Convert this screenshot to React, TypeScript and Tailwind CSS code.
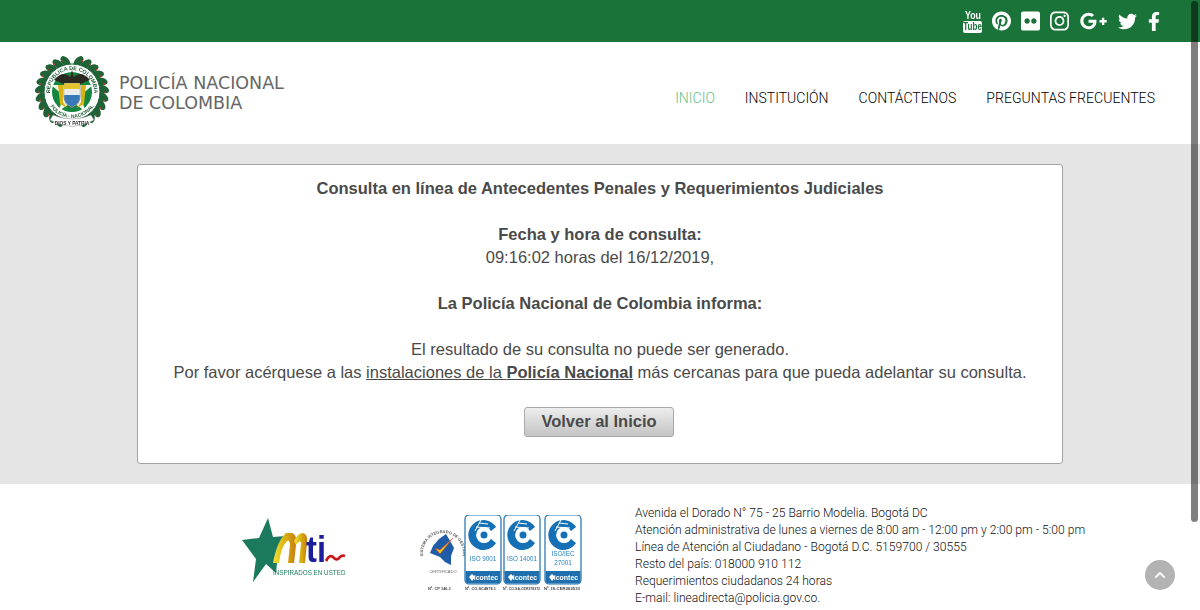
import { FaPinterest, FaFlickr, FaInstagram, FaGooglePlusG, FaTwitter, FaFacebookF, FaChevronUp } from "react-icons/fa"

function YoutubeIcon() {
  return (
    <div className="flex h-[23px] w-[19px] flex-col items-center font-['Liberation_Sans',sans-serif] font-bold text-white">
      <span className="block h-[10px] scale-x-[0.8] text-[11px] leading-[10px]">You</span>
      <span className="mt-px flex h-[12px] w-[19px] items-center justify-center rounded-[2px] bg-white text-[10px] leading-none text-[#1a7339]">
        <span className="scale-x-[0.8]">Tube</span>
      </span>
    </div>
  )
}

function TopBar() {
  return (
    <div className="flex h-[42px] items-center justify-end gap-[10px] bg-[#1a7339] pr-[40px] text-white">
      <YoutubeIcon />
      <FaPinterest className="h-[20px] w-[19px]" />
      <FaFlickr className="h-[22px] w-[19px]" />
      <FaInstagram className="h-[22px] w-[19px]" />
      <FaGooglePlusG className="h-[22px] w-[29px]" />
      <FaTwitter className="h-[21px] w-[19px]" />
      <FaFacebookF className="ml-[1px] h-[23px] w-[12px]" />
    </div>
  )
}

function PoliceCrest() {
  const leaves = Array.from({ length: 11 }, (_, i) => 12 + i * 14.5)
  return (
    <svg viewBox="0 0 76 76" className="h-[76px] w-[76px] shrink-0 blur-[0.35px]">
      <defs>
        <path id="ringTop" d="M 16 37 A 22 22 0 0 1 60 37" />
        <path id="ringBottom" d="M 12.5 42 A 26 26 0 0 0 63.5 42" />
      </defs>
      {leaves.map((a) => (
        <g key={a}>
          <ellipse cx="38" cy="6" rx="3.8" ry="6.5" fill="#1e6236" transform={`rotate(${a} 38 37) rotate(28 38 6)`} />
          <ellipse cx="38" cy="6" rx="3.8" ry="6.5" fill="#1e6236" transform={`rotate(${-a} 38 37) rotate(-28 38 6)`} />
          <circle cx="38" cy="4" r="0.9" fill="#d3312c" transform={`rotate(${a + 6} 38 37)`} />
          <circle cx="38" cy="4" r="0.9" fill="#d3312c" transform={`rotate(${-a - 6} 38 37)`} />
        </g>
      ))}
      <circle cx="38" cy="37" r="28" fill="#fff" stroke="#1e6236" strokeWidth="1" />
      <text fontSize="5.4" fontWeight="700" fill="#1c5a33" fontFamily="Liberation Sans, sans-serif">
        <textPath href="#ringTop" startOffset="50%" textAnchor="middle">REPÚBLICA DE COLOMBIA</textPath>
      </text>
      <text fontSize="5" fontWeight="700" fill="#1c5a33" fontFamily="Liberation Sans, sans-serif">
        <textPath href="#ringBottom" startOffset="50%" textAnchor="middle">POLICÍA · NACIONAL</textPath>
      </text>
      <circle cx="38" cy="37" r="20" fill="#12853f" />
      <polygon points="38,17 43,30 59,30 47,40 51,56 38,47 25,56 29,40 17,30 33,30" fill="#f3f5ef" />
      <path d="M20 25 Q29 15 36 22 L38 15 L40 22 Q47 15 56 25 L46 29 L30 29 Z" fill="#2b2a22" />
      <path d="M24 30 L29 30 L29 47 L33 53 L26 49 Z" fill="#d9b313" />
      <path d="M52 30 L47 30 L47 47 L43 53 L50 49 Z" fill="#d9b313" />
      <path d="M30 28 H46 V42 Q46 49 38 53 Q30 49 30 42 Z" fill="#f4e5a6" stroke="#333" strokeWidth="0.5" />
      <rect x="30.3" y="28.5" width="15.4" height="5.5" fill="#e3c22b" />
      <rect x="30.3" y="34" width="15.4" height="6" fill="#e9edf0" />
      <path d="M30.3 40 H45.7 V43 Q45.7 48 38 52.5 Q30.3 48 30.3 43 Z" fill="#3a79b8" />
      <path d="M19 60 Q38 68 57 60 L60 65 Q38 78 16 65 Z" fill="#fff" stroke="#8a8a8a" strokeWidth="0.5" />
      <text x="38" y="70" textAnchor="middle" fontSize="4.8" fontWeight="700" fill="#333" fontFamily="Liberation Sans, sans-serif">DIOS Y PATRIA</text>
    </svg>
  )
}

function Header() {
  return (
    <header className="flex h-[102px] items-center justify-between bg-white pl-[34px] pr-[45px]">
      <div className="flex items-center gap-[9px]">
        <PoliceCrest />
        <div className="font-['DejaVu_Sans',sans-serif] text-[17.5px] leading-[20px] text-[#666]">
          <div>POLICÍA NACIONAL</div>
          <div>DE COLOMBIA</div>
        </div>
      </div>
      <nav className="flex items-center gap-[30px] pt-[10px] font-['Roboto',sans-serif] text-[14px] font-light text-black">
        <a className="text-[#5fbf85]">INICIO</a>
        <a>INSTITUCIÓN</a>
        <a>CONTÁCTENOS</a>
        <a className="tracking-[0.05px]">PREGUNTAS FRECUENTES</a>
      </nav>
    </header>
  )
}

function ResultCard() {
  return (
    <div className="mx-auto h-[300px] w-[926px] rounded-[3px] border border-[#a3a3a3] bg-white pt-[12px] text-center font-['Liberation_Sans',sans-serif] text-[16.5px] leading-[23px] text-[#4a4a4a]">
      <p className="font-bold">Consulta en línea de Antecedentes Penales y Requerimientos Judiciales</p>
      <p className="mt-[23px] font-bold">Fecha y hora de consulta:</p>
      <p>09:16:02 horas del 16/12/2019,</p>
      <p className="mt-[23px] font-bold">La Policía Nacional de Colombia informa:</p>
      <p className="mt-[23px]">El resultado de su consulta no puede ser generado.</p>
      <p>
        Por favor acérquese a las <span className="underline">instalaciones de la <b>Policía Nacional</b></span> más cercanas para que pueda adelantar su consulta.
      </p>
      <button className="mr-[2px] mt-[23px] h-[30px] w-[150px] rounded-[3px] border border-[#a8a8a8] bg-gradient-to-b from-[#ededed] to-[#c4c4c4] pb-[2px] text-[16.5px] font-bold text-[#4a4a4a]">
        Volver al Inicio
      </button>
    </div>
  )
}

function MtiLogo() {
  return (
    <svg viewBox="0 0 106 68" className="h-[68px] w-[106px] shrink-0 blur-[0.4px]">
      <defs>
        <linearGradient id="ribbon" x1="0" y1="0" x2="1" y2="0">
          <stop offset="0" stopColor="#f2e33a" />
          <stop offset="0.5" stopColor="#d9b311" />
          <stop offset="1" stopColor="#c77d0e" />
        </linearGradient>
      </defs>
      <polygon points="26,1 31,20 44,19 36,36 34,56 24,47 11,65 14,42 0,23 17,21" fill="#1b7a5e" />
      <path d="M31 46 Q35 24 44 16 L50 16 Q55 17 54 28 L52 46 L46 46 L48 27 Q47 22 45 24 Q39 30 37 46 Z" fill="url(#ribbon)" />
      <path d="M52 24 Q56 16 61 16 Q66 17 65 26 L63 46 L57 46 L59 26 Q58 22 54 28 Z" fill="url(#ribbon)" />
      <text x="64" y="45" fontSize="37" fontWeight="700" textLength="20" lengthAdjust="spacingAndGlyphs" fill="#1c1f9c" fontFamily="Liberation Sans, sans-serif">ti</text>
      <path d="M84 44 Q88 36 92 41 Q95 44 98 40 Q100 38 103 39" fill="none" stroke="#c8161d" strokeWidth="2.8" />
      <text x="31" y="58" fontSize="6.3" fill="#1b7a5e" fontFamily="Liberation Sans, sans-serif">INSPIRADOS EN USTED</text>
    </svg>
  )
}

function IsoBadge({ x, w, lines }: { x: number; w: number; lines: string[] }) {
  const cx = x + w / 2
  return (
    <g>
      <rect x={x} y="0" width={w} height="69" rx="4" fill="#fff" stroke="#1f6fae" strokeWidth="1.2" />
      <path d={`M${x + 0.6} 56 H${x + w - 0.6} V65 Q${x + w - 0.6} 68.5 ${x + w - 4} 68.5 H${x + 4} Q${x + 0.6} 68.5 ${x + 0.6} 65 Z`} fill="#1f6fae" />
      <path d={`M${cx + 13} 12 A15 15 0 1 0 ${cx + 13} 28 L${cx + 8} 24 A8 8 0 1 1 ${cx + 8} 16 Z`} fill="#1570b5" />
      <path d={`M${cx + 5} 9 L${cx - 4} 8 M${cx + 7} 13 L${cx - 7} 12 M${cx - 2} 5 L${cx - 8} 16`} fill="none" stroke="#fff" strokeWidth="1" />
      <circle cx={cx + 1} cy="20" r="3.5" fill="#1570b5" />
      {lines.map((line, i) => (
        <text key={line} x={cx} y={lines.length > 1 ? 41 + i * 9 : 46} textAnchor="middle" fontSize="6.3" fill="#1f7fc0" fontFamily="Liberation Sans, sans-serif">{line}</text>
      ))}
      <text x={cx + 3} y="65" textAnchor="middle" fontSize="7" fontWeight="700" fill="#fff" fontFamily="Liberation Sans, sans-serif">icontec</text>
      <path d={`M${x + 4} 62 L${x + 7} 59 L${x + 10} 62 L${x + 7} 66 Z`} fill="#fff" />
    </g>
  )
}

function Certifications() {
  return (
    <svg viewBox="0 0 162 82" className="h-[82px] w-[162px] shrink-0 blur-[0.4px]">
      <defs>
        <path id="mapRing" d="M 7 50 A 20 20 0 1 1 39 50" />
      </defs>
      <text fontSize="4" fontWeight="700" fill="#555" fontFamily="Liberation Sans, sans-serif">
        <textPath href="#mapRing" startOffset="50%" textAnchor="middle">SISTEMA INTEGRADO DE GESTIÓN</textPath>
      </text>
      <path d="M26 19 L29 24 L34 33 L31 41 L31 50 L25 47 L20 42 L10 38 L13 31 L19 24 Z" fill="#1e5ca8" />
      <path d="M15 33 L20 39 L33 23 L20 35 Z" fill="#f0c419" stroke="#d6302c" strokeWidth="0.5" />
      <text x="23" y="58" textAnchor="middle" fontSize="4" fill="#666" fontFamily="Liberation Sans, sans-serif">CERTIFICADO</text>
      <IsoBadge x={45} w={36} lines={["ISO 9001"]} />
      <IsoBadge x={84} w={36} lines={["ISO 14001"]} />
      <IsoBadge x={125} w={36} lines={["ISO/IEC", "27001"]} />
      <g fontSize="4" fill="#444" fontWeight="700" fontFamily="Liberation Sans, sans-serif">
        <text x="8" y="75" textLength="23" lengthAdjust="spacingAndGlyphs">Nº. CP 146-1</text>
        <text x="45" y="75" textLength="31" lengthAdjust="spacingAndGlyphs">Nº. CO-SC4878-1</text>
        <text x="83" y="75" textLength="37" lengthAdjust="spacingAndGlyphs">Nº. CO-SA-CER278372</text>
        <text x="124" y="75" textLength="36" lengthAdjust="spacingAndGlyphs">Nº. IS-CER282533</text>
      </g>
    </svg>
  )
}

function Footer() {
  return (
    <footer className="flex h-[126px] items-start bg-white pl-[242px] pt-[20px]">
      <div className="mt-[13px]">
        <MtiLogo />
      </div>
      <div className="ml-[72px] mt-[11px]">
        <Certifications />
      </div>
      <div className="ml-[53px] mt-px font-['Roboto',sans-serif] text-[12.1px] font-light leading-[17px] text-[#111]">
        <p>Avenida el Dorado N° 75 - 25 Barrio Modelia. Bogotá DC</p>
        <p>Atención administrativa de lunes a viernes de 8:00 am - 12:00 pm y 2:00 pm - 5:00 pm</p>
        <p>Línea de Atención al Ciudadano - Bogotá D.C. 5159700 / 30555</p>
        <p>Resto del país: 018000 910 112</p>
        <p>Requerimientos ciudadanos 24 horas</p>
        <p>E-mail: lineadirecta@policia.gov.co.</p>
      </div>
    </footer>
  )
}

export default function App() {
  return (
    <div className="relative h-[610px] w-[1200px] overflow-hidden bg-white">
      <TopBar />
      <Header />
      <main className="h-[340px] bg-[#e5e5e5] pt-[20px]">
        <ResultCard />
      </main>
      <Footer />
      {/* overlay scrollbar and back to top button */}
      <div className="absolute right-[2px] top-[1px] h-[521px] w-[7px] rounded-full bg-black/50" />
      <div className="absolute left-[1145px] top-[560px] flex h-[30px] w-[30px] items-center justify-center rounded-full bg-[#b3b3b3] text-white">
        <FaChevronUp className="h-[12px] w-[12px]" />
      </div>
    </div>
  )
}
